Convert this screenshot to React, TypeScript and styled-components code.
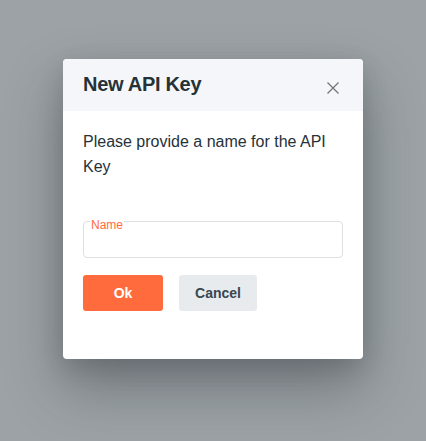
import styled, { createGlobalStyle } from 'styled-components';

const GlobalStyle = createGlobalStyle`
  html, body {
    margin: 0;
    padding: 0;
    height: 100%;
  }
  body {
    background: #9ca2a5;
    font-family: 'Liberation Sans', Arial, sans-serif;
  }
  #root {
    height: 100%;
  }
`;

const Backdrop = styled.div`
  width: 426px;
  height: 441px;
  padding-top: 59px;
  box-sizing: border-box;
  display: flex;
  justify-content: center;
  align-items: flex-start;
`;

const Dialog = styled.div`
  width: 300px;
  height: 300px;
  background: #ffffff;
  border-radius: 4px;
  overflow: hidden;
  box-shadow: 0 28px 56px rgba(40, 46, 52, 0.38), 0 8px 24px rgba(40, 46, 52, 0.18);
  display: flex;
  flex-direction: column;
`;

const Header = styled.div`
  height: 52px;
  background: #f5f6f9;
  padding: 0 20px;
  display: flex;
  align-items: center;
  justify-content: space-between;
`;

const Title = styled.h2`
  margin: 0;
  margin-top: -2px;
  font-size: 20px;
  font-weight: bold;
  color: #263238;
  letter-spacing: -0.3px;
`;

const CloseButton = styled.button`
  border: none;
  background: none;
  padding: 0;
  margin-top: 6px;
  margin-right: 3px;
  width: 14px;
  height: 14px;
  display: flex;
  align-items: center;
  justify-content: center;
  cursor: pointer;
`;

const Body = styled.div`
  padding: 18px 20px 0;
  display: flex;
  flex-direction: column;
`;

const Message = styled.p`
  margin: 0;
  font-size: 16px;
  line-height: 25px;
  color: #263238;
`;

const Field = styled.div`
  position: relative;
  margin-top: 42px;
  height: 37px;
  border: 1px solid #dde0e2;
  border-radius: 4px;
  box-sizing: border-box;
`;

const FieldLabel = styled.label`
  position: absolute;
  top: -4px;
  left: 6px;
  padding: 0 1px;
  background: #ffffff;
  font-size: 12px;
  line-height: 14px;
  color: #ff6b3d;
`;

const Input = styled.input`
  width: 100%;
  height: 100%;
  border: none;
  outline: none;
  background: transparent;
  padding: 0 12px;
  box-sizing: border-box;
  font-family: inherit;
  font-size: 14px;
`;

const Actions = styled.div`
  display: flex;
  gap: 16px;
  margin-top: 17px;
`;

const Button = styled.button<{ primary?: boolean }>`
  height: 36px;
  width: ${({ primary }) => (primary ? '80px' : '78px')};
  border: none;
  border-radius: 3px;
  background: ${({ primary }) => (primary ? '#ff6b3d' : '#e8ebee')};
  color: ${({ primary }) => (primary ? '#ffffff' : '#37474f')};
  font-family: inherit;
  font-size: 14px;
  font-weight: bold;
  cursor: pointer;
`;

export default function App() {
  return (
    <>
      <GlobalStyle />
      <Backdrop>
        <Dialog>
          <Header>
            <Title>New API Key</Title>
            <CloseButton aria-label="Close">
              <svg width="12" height="12" viewBox="0 0 12 12">
                <path d="M0.5 0.5L11.5 11.5M11.5 0.5L0.5 11.5" stroke="#6b7479" strokeWidth="1.2" />
              </svg>
            </CloseButton>
          </Header>
          <Body>
            <Message>Please provide a name for the API Key</Message>
            <Field>
              <FieldLabel>Name</FieldLabel>
              <Input />
            </Field>
            <Actions>
              <Button primary>Ok</Button>
              <Button>Cancel</Button>
            </Actions>
          </Body>
        </Dialog>
      </Backdrop>
    </>
  );
}
